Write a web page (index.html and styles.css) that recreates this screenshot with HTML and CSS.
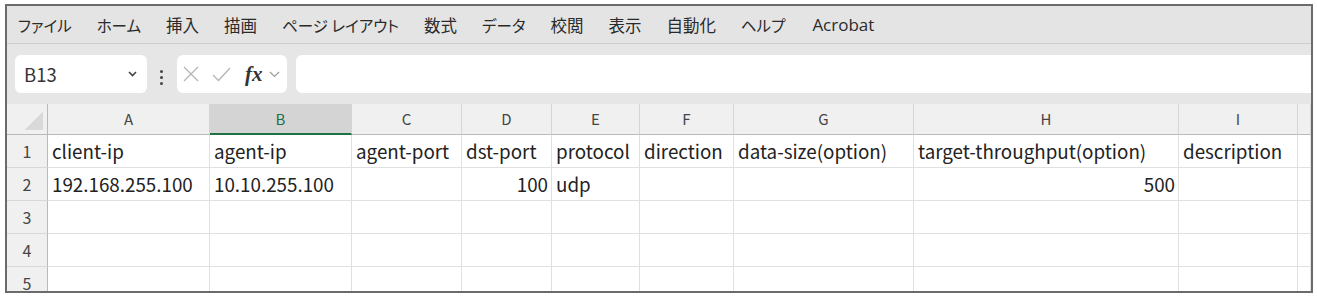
FILE: index.html
```html
<!DOCTYPE html>
<html lang="ja">
<head>
  <meta charset="UTF-8">
  <title>Sheet</title>
  <link rel="stylesheet" href="styles.css">
</head>
<body>
  <div class="window">
    <nav class="menu">
      <span class="kana">ファイル</span>
      <span class="kana">ホーム</span>
      <span>挿入</span>
      <span>描画</span>
      <span class="kana">ページ レイアウト</span>
      <span>数式</span>
      <span class="kana">データ</span>
      <span>校閲</span>
      <span>表示</span>
      <span>自動化</span>
      <span class="kana">ヘルプ</span>
      <span class="latin">Acrobat</span>
    </nav>

    <div class="formula-bar">
      <div class="name-box">
        <span>B13</span>
        <svg width="9" height="6" viewBox="0 0 9 6"><path d="M1 1 L4.5 4.5 L8 1" fill="none" stroke="#444" stroke-width="1.6"/></svg>
      </div>
      <div class="kebab"><i></i><i></i><i></i></div>
      <div class="fx-box">
        <svg width="16" height="16" viewBox="0 0 16 16"><path d="M1 1 L15 15 M15 1 L1 15" stroke="#b5b5b5" stroke-width="1.3"/></svg>
        <svg width="19" height="15" viewBox="0 0 19 15"><path d="M1 8 L6.5 13.5 L18 1" fill="none" stroke="#b5b5b5" stroke-width="1.3"/></svg>
        <span class="fx">fx</span>
        <svg width="11" height="7" viewBox="0 0 11 7"><path d="M1 1 L5.5 5.5 L10 1" fill="none" stroke="#9a9a9a" stroke-width="1.1"/></svg>
      </div>
      <div class="formula-input"></div>
    </div>

    <div class="sheet">
      <div class="h corner"></div>
      <div class="h">A</div>
      <div class="h sel">B</div>
      <div class="h">C</div>
      <div class="h">D</div>
      <div class="h">E</div>
      <div class="h">F</div>
      <div class="h">G</div>
      <div class="h">H</div>
      <div class="h">I</div>
      <div class="h"></div>

      <div class="r">1</div>
      <div class="c">client-ip</div>
      <div class="c">agent-ip</div>
      <div class="c">agent-port</div>
      <div class="c">dst-port</div>
      <div class="c">protocol</div>
      <div class="c">direction</div>
      <div class="c">data-size(option)</div>
      <div class="c">target-throughput(option)</div>
      <div class="c">description</div>
      <div class="c"></div>

      <div class="r">2</div>
      <div class="c">192.168.255.100</div>
      <div class="c">10.10.255.100</div>
      <div class="c"></div>
      <div class="c num">100</div>
      <div class="c">udp</div>
      <div class="c"></div>
      <div class="c"></div>
      <div class="c num">500</div>
      <div class="c"></div>
      <div class="c"></div>

      <div class="r">3</div>
      <div class="c"></div><div class="c"></div><div class="c"></div><div class="c"></div><div class="c"></div>
      <div class="c"></div><div class="c"></div><div class="c"></div><div class="c"></div><div class="c"></div>

      <div class="r">4</div>
      <div class="c"></div><div class="c"></div><div class="c"></div><div class="c"></div><div class="c"></div>
      <div class="c"></div><div class="c"></div><div class="c"></div><div class="c"></div><div class="c"></div>

      <div class="r">5</div>
      <div class="c"></div><div class="c"></div><div class="c"></div><div class="c"></div><div class="c"></div>
      <div class="c"></div><div class="c"></div><div class="c"></div><div class="c"></div><div class="c"></div>
    </div>
  </div>
</body>
</html>
```

FILE: styles.css
```css
body {
  margin: 0;
  background: #fff;
  font-family: "Noto Sans CJK JP", "Noto Sans", sans-serif;
  color: #222;
}
.window {
  margin: 4px 0 0 5px;
  width: 1304px;
  height: 285px;
  border: 2px solid #6b6b6b;
  overflow: hidden;
}

/* ribbon tabs */
.menu {
  height: 37px;
  background: #e4e4e4;
  border-bottom: 1px solid #cdcdcd;
  display: flex;
  align-items: center;
  gap: 25px;
  padding-left: 11px;
  font-size: 16.5px;
  color: #2a2a2a;
  font-feature-settings: "palt";
}
.menu .kana {
  font-size: 15.5px;
}
.menu .latin {
  font-family: "Open Sans", "Noto Sans", sans-serif;
  font-size: 17px;
  margin-left: 2px;
}

/* formula bar */
.formula-bar {
  height: 60px;
  box-sizing: border-box;
  padding: 11px 0 0 8px;
  background: #e6e6e6;
  display: flex;
  align-items: flex-start;
}
.name-box {
  width: 132px;
  height: 38px;
  box-sizing: border-box;
  padding: 0 10px 0 9px;
  background: #fff;
  border-radius: 6px;
  display: flex;
  align-items: center;
  justify-content: space-between;
  font-size: 18.5px;
  color: #333;
}
.kebab {
  width: 4px;
  margin: 15px 13px 0 13px;
  display: flex;
  flex-direction: column;
  gap: 3px;
}
.kebab i {
  width: 3px;
  height: 3px;
  background: #444;
  border-radius: 50%;
}
.fx-box {
  width: 110px;
  height: 38px;
  box-sizing: border-box;
  padding-left: 6px;
  background: #fff;
  border-radius: 6px;
  display: flex;
  align-items: center;
  gap: 13px;
}
.fx-box .fx {
  font-family: "Liberation Serif", serif;
  font-style: italic;
  font-weight: bold;
  font-size: 21px;
  color: #333;
  margin-left: 1px;
  margin-right: -7px;
}
.formula-input {
  flex: 1;
  height: 38px;
  margin-left: 9px;
  background: #fff;
  border-radius: 6px 0 0 6px;
}

/* grid */
.sheet {
  display: grid;
  grid-template-columns: 41px 162px 142px 110px 90px 88px 94px 180px 265px 119px 1fr;
  grid-template-rows: 31px repeat(5, 33px);
}
.sheet > div {
  box-sizing: border-box;
  white-space: nowrap;
  overflow: hidden;
}
.h {
  background: #f0f0f0;
  border-right: 1px solid #d5d5d5;
  border-bottom: 1px solid #b9b9b9;
  text-align: center;
  font-size: 15px;
  line-height: 30px;
  color: #454545;
}
.h.sel {
  background: #d4d4d4;
  border-bottom: 2px solid #1e7145;
  color: #1e7145;
}
.corner {
  border-right-color: #b9b9b9;
  background: #f0f0f0 linear-gradient(to bottom right, transparent 50%, #d9d9d9 50%) no-repeat right 4px bottom 4px / 19px 19px;
}
.r {
  background: #f0f0f0;
  border-right: 1px solid #b9b9b9;
  border-bottom: 1px solid #d8d8d8;
  text-align: center;
  font-size: 16px;
  line-height: 32px;
  color: #454545;
}
.c {
  border-right: 1px solid #e0e0e0;
  border-bottom: 1px solid #e0e0e0;
  padding: 0 3px 0 4px;
  font-size: 18.8px;
  line-height: 31px;
  color: #222;
}
.c.num {
  text-align: right;
}
```
